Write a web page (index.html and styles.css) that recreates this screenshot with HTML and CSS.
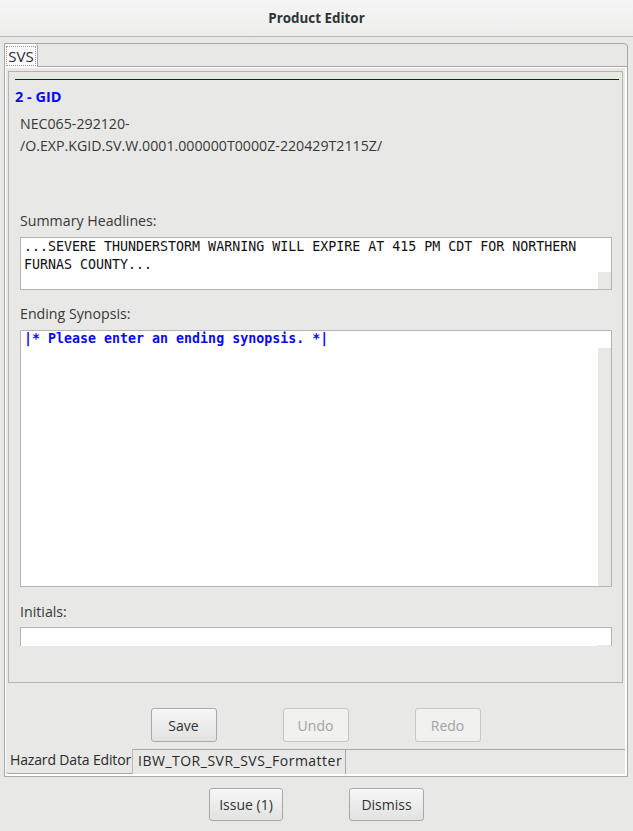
FILE: index.html
```html
<!DOCTYPE html>
<html>
<head>
<meta charset="utf-8">
<title>Product Editor</title>
<link rel="stylesheet" href="styles.css">
</head>
<body>
<div class="titlebar">Product Editor</div>
<div class="folder">
  <div class="strip">
    <div class="tab"><span class="focus">SVS</span></div>
  </div>
  <div class="folder-body">
    <div class="content">
      <div class="rule"></div>
      <div class="hazard">2 - GID</div>
      <div class="vtec">NEC065-292120-</div>
      <div class="vtec">/O.EXP.KGID.SV.W.0001.000000T0000Z-220429T2115Z/</div>
      <div class="label label-first">Summary Headlines:</div>
      <div class="textbox tb-summary">
        <div class="tb-text">...SEVERE THUNDERSTORM WARNING WILL EXPIRE AT 415 PM CDT FOR NORTHERN<br>FURNAS COUNTY...</div>
        <div class="sb sb-low"></div>
      </div>
      <div class="label">Ending Synopsis:</div>
      <div class="textbox tb-synopsis">
        <div class="tb-text synopsis">|* Please enter an ending synopsis. *|</div>
        <div class="sb"></div>
      </div>
      <div class="label">Initials:</div>
      <div class="textbox tb-initials">
        <div class="tb-text"></div>
        <div class="sb"></div>
      </div>
    </div>
    <div class="actions">
      <button class="btn">Save</button>
      <button class="btn" disabled>Undo</button>
      <button class="btn" disabled>Redo</button>
    </div>
    <div class="btabs">
      <div class="btab btab-sel">Hazard Data Editor</div>
      <div class="btab btab-other">IBW_TOR_SVR_SVS_Formatter</div>
      <div class="btab-fill"></div>
    </div>
  </div>
</div>
<div class="dialog-actions">
  <button class="btn btn-issue">Issue (1)</button>
  <button class="btn btn-dismiss">Dismiss</button>
</div>
</body>
</html>
```
FILE: styles.css
```css
html, body {
  margin: 0;
  padding: 0;
}
body {
  width: 633px;
  height: 831px;
  overflow: hidden;
  background: #e8e8e7;
  font-family: "Open Sans", "Noto Sans", sans-serif;
  font-size: 14.2px;
  color: #383838;
}
.titlebar {
  height: 36px;
  border-bottom: 1px solid #b9b9b6;
  background: linear-gradient(#f5f5f5, #ededec);
  display: flex;
  align-items: center;
  justify-content: center;
  font-weight: bold;
  font-size: 13.4px;
  color: #2e3436;
}
.folder {
  margin: 6px 5px 0 4px;
  border: 1px solid #a6a6a4;
  border-top-right-radius: 4px;
}
.strip {
  height: 22px;
  border-bottom: 1px solid #a6a6a4;
  display: flex;
}
.tab {
  width: 33px;
  height: 23px;
  margin-bottom: -1px;
  background: #fafafa;
  border-right: 1px solid #a6a6a4;
  border-top-left-radius: 3px;
  border-top-right-radius: 3px;
  display: flex;
  align-items: center;
  justify-content: center;
  box-sizing: border-box;
}
.focus {
  font-size: 15px;
  line-height: 18px;
  padding: 0 1px;
  border: 1px dotted #9a9a9a;
  color: #2a2a2a;
}
.folder-body {
  border-top: 1px solid #ffffff;
  border-left: 1px solid #ffffff;
  border-right: 2px solid #ffffff;
  border-bottom: 2px solid #ffffff;
}
.content {
  margin: 3px 2px 0 2px;
  height: 612px;
  box-sizing: border-box;
  border: 1px solid #b4b4b2;
  display: flex;
  flex-direction: column;
}
.rule {
  height: 1px;
  background: #0000f0;
  margin: 7px 3px 0 6px;
}
.hazard {
  margin-top: 7px;
  padding-left: 6px;
  line-height: 20px;
  font-weight: bold;
  font-size: 14.5px;
  color: #0a0af2;
}
.vtec {
  line-height: 22px;
  padding-left: 11px;
}
.hazard + .vtec {
  margin-top: 6px;
}
.label {
  line-height: 20px;
  padding-left: 11px;
  margin-top: 14px;
}
.label-first {
  margin-top: 54px;
}
.label + .textbox {
  margin-top: 6px;
}
.textbox {
  margin: 0 10px 0 11px;
  background: #ffffff;
  border: 1px solid #b4b4b2;
  box-sizing: border-box;
  display: flex;
}
.tb-summary {
  height: 53px;
}
.tb-synopsis {
  height: 257px;
}
.tb-synopsis + .label {
  margin-top: 15px;
}
.tb-initials {
  height: 19px;
  border-bottom: none;
}
.label + .tb-initials {
  margin-top: 5px;
}
.tb-text {
  flex: 1;
  padding: 0 0 0 3px;
  font-family: "DejaVu Sans Mono", "Liberation Mono", monospace;
  font-size: 13.3px;
  line-height: 18px;
  color: #111111;
  white-space: nowrap;
  overflow: hidden;
}
.synopsis {
  font-weight: bold;
  color: #0a0af2;
  line-height: 16px;
}
.sb {
  width: 13px;
  margin-top: 17px;
  background: #e8e8e7;
}
.sb-low {
  margin-top: 34px;
}
.actions {
  display: flex;
  justify-content: center;
  gap: 66px;
  margin-top: 25px;
}
.btn {
  font-family: "Open Sans", "Noto Sans", sans-serif;
  font-size: 14px;
  color: #2e3436;
  height: 34px;
  width: 66px;
  padding: 0;
  border: 1px solid #a8a8a6;
  border-radius: 3px;
  background: linear-gradient(#f6f6f6, #e2e2e1);
  box-shadow: 0 1px 0 rgba(255, 255, 255, 0.6) inset;
}
.btn:disabled {
  color: #a2a2a2;
  background: #f1f1f0;
  border-color: #c6c6c4;
  box-shadow: none;
}
.btabs {
  display: flex;
  margin-top: 7px;
  height: 25px;
}
.btab {
  box-sizing: border-box;
  height: 25px;
  line-height: 22px;
  white-space: nowrap;
  color: #2a2a2a;
  font-size: 14px;
}
.btab-sel {
  width: 127px;
  padding-left: 4px;
  letter-spacing: -0.15px;
  border-right: 1px solid #b9b9b7;
  border-bottom: 1px solid #a6a6a4;
  border-bottom-left-radius: 3px;
}
.btab-other {
  width: 213px;
  padding-left: 5px;
  letter-spacing: 0.5px;
  border-top: 1px solid #a6a6a4;
  border-right: 1px solid #a6a6a4;
}
.btab-fill {
  flex: 1;
  border-top: 1px solid #a6a6a4;
}
.dialog-actions {
  display: flex;
  justify-content: center;
  gap: 66px;
  margin-top: 11px;
}
.btn-issue {
  width: 74px;
  height: 33px;
}
.btn-dismiss {
  width: 75px;
  height: 33px;
}
```
